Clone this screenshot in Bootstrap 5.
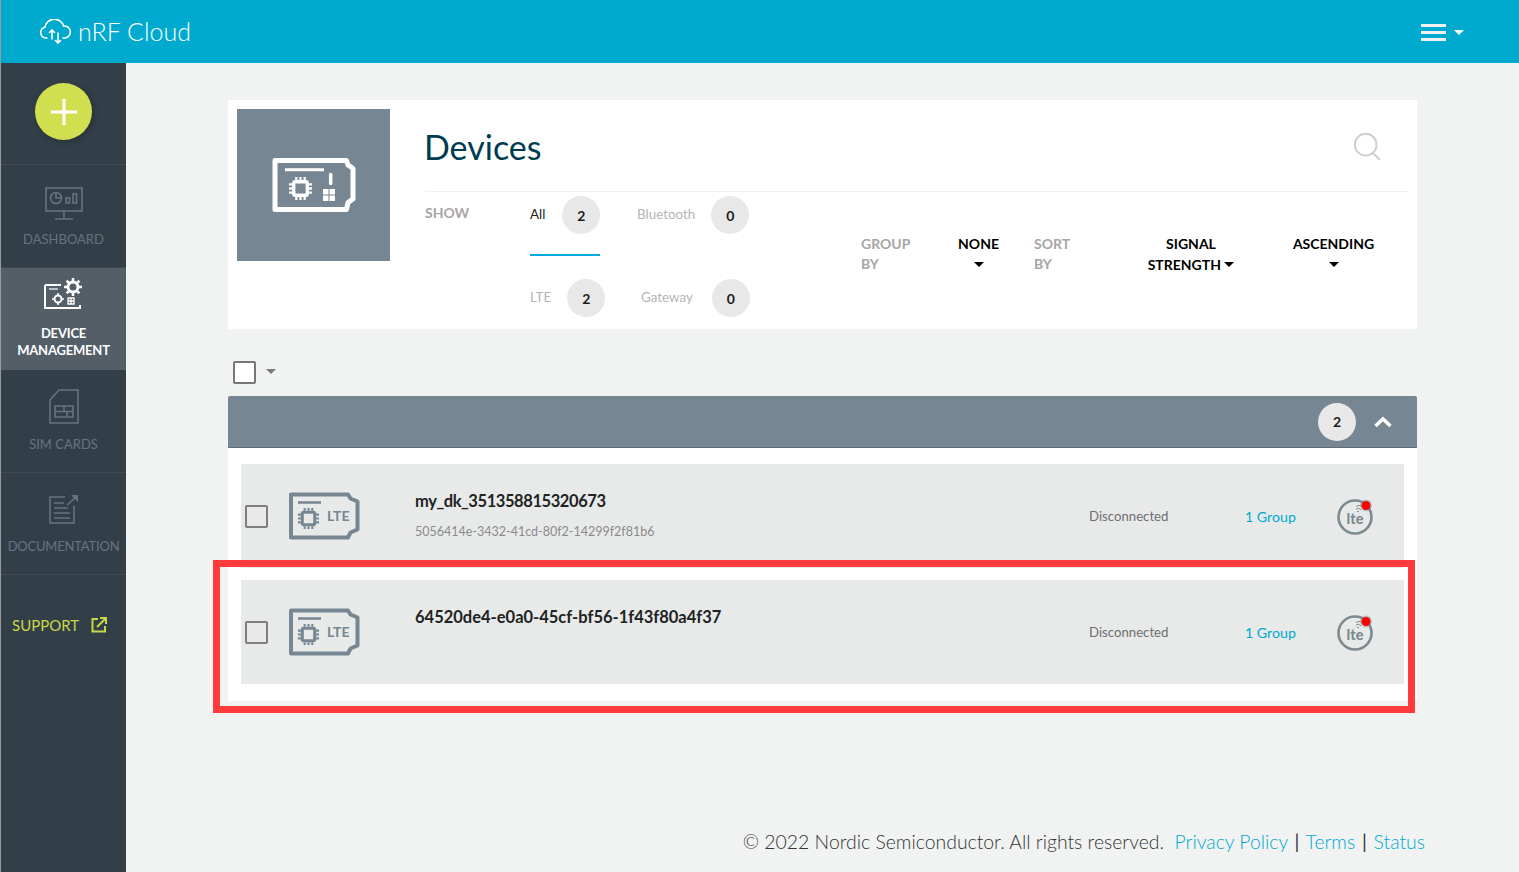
<!DOCTYPE html>
<html lang="en">
<head>
  <meta charset="UTF-8">
  <title>nRF Cloud - Devices</title>
  <link href="https://cdn.jsdelivr.net/npm/bootstrap@5.3.0/dist/css/bootstrap.min.css" rel="stylesheet">
  <style>
    html, body { height: 100%; }
    body {
      background: #f1f3f2;
      font-family: "Lato", "Liberation Sans", sans-serif;
      overflow: hidden;
    }
    .app-shell { height: 872px; border-left: 1px solid #9a9a9a; position: relative; }
    .top-bar { height: 63px; background: #00a9ce; color: #fff; padding: 0 54px 0 38px; }
    .brand-name { font-size: 25px; line-height: 1; margin-left: 7px; font-weight: 300; }
    .burger-wrap { margin: 2px 1px 0 0; }
    .burger { width: 25px; height: 17px; display: flex; flex-direction: column; justify-content: space-between; }
    .burger i { display: block; height: 3px; background: #f0f0f0; }
    .caret-down { width: 0; height: 0; border-left: 5.5px solid transparent; border-right: 5.5px solid transparent; border-top: 5px solid currentColor; display: inline-block; }
    .body-wrap { height: 809px; }
    .side-nav { width: 125px; background: #333f48; flex: none; }
    .add-area { height: 102px; border-bottom: 1px solid #404b54; padding-top: 20px; }
    .add-btn { width: 57px; height: 57px; border-radius: 50%; background: #d0df50; box-shadow: 2px 2px 6px rgba(0,0,0,.25); }
    .side-item { height: 102px; border-bottom: 1px solid #404b54; color: #66747f; font-size: 13px; line-height: 17px; text-align: center; }
    .side-item svg { display: block; margin-left: auto; margin-right: auto; }
    .item-dash { height: 103px; padding-top: 22px; }
    .item-dash svg { margin-bottom: 10px; }
    .item-sim { height: 103px; padding-top: 19px; }
    .item-sim svg { margin-bottom: 12px; }
    .item-doc { padding-top: 21px; letter-spacing: -.2px; }
    .item-doc svg { margin-bottom: 14px; }
    .side-item.is-active { background: #535e67; color: #fff; padding-top: 10px; border-bottom: 0; font-weight: 700; letter-spacing: -.2px; }
    .side-item.is-active svg { margin-bottom: 15px; }
    .side-support { color: #c9d647; font-size: 15px; padding: 39px 0 0 11px; }
    .support-icon { margin-left: 12px; }
    .main-area { padding: 37px 0 0 102px; position: relative; }
    .head-panel { width: 1189px; height: 229px; background: #fff; padding: 9px 9px 0; }
    .head-tile { width: 153px; height: 152px; background: #768692; flex: none; }
    .head-body { margin-left: 35px; flex: 1; }
    .title-line { height: 83px; border-bottom: 1px solid #eff0f0; padding: 0 26px 7px 0; }
    .page-title { font-size: 34px; color: #003c50; font-weight: 400; margin: 0 0 0 -1px; line-height: 1; }
    .show-label { width: 105px; color: #a7a5a6; font-weight: 700; font-size: 14px; padding-top: 12px; line-height: 17px; }
    .tab-cell { width: 107px; height: 64px; padding-top: 4px; }
    .tab-low { width: 111px; height: 38px; padding-top: 0; }
    .tab-low-wide { width: 112px; height: 38px; padding-top: 0; }
    .tab-second { width: 112px; }
    .tab-lower-row { margin-top: 23px; }
    .tab-name { color: #b5b5b5; font-size: 13.4px; margin: 8px 16px 0 0; }
    .tab-name-gw { margin-right: 19px; }
    .tab-name-on { color: #222; margin-right: 17px; }
    .count-dot { width: 38px; height: 38px; border-radius: 50%; background: #e8e8e8; color: #1c1c1c; font-size: 14px; font-weight: 700; display: flex; align-items: center; justify-content: center; flex: none; }
    .tab-on { position: relative; }
    .tab-on::after { content: ""; position: absolute; left: 0; width: 70px; bottom: 0; height: 2px; background: #00a9e0; }
    .sort-area { margin-left: 108px; padding-top: 41px; }
    .sort-label { color: #a7a5a6; font-weight: 700; font-size: 14px; line-height: 20px; padding-top: 1px; }
    .sort-group { width: 97px; }
    .sort-by { width: 112px; }
    .sort-value { color: #000; font-weight: 700; font-size: 14px; line-height: 21px; text-align: center; }
    .sort-value .caret-down { vertical-align: 3px; }
    .val-none { width: 41px; margin-right: 35px; }
    .val-signal { width: 90px; }
    .val-order { width: 85px; margin-left: 55px; }
    .bulk-line { height: 67px; padding: 32px 0 0 5px; color: #7b7b7b; }
    .bulk-caret { margin: 8px 0 0 2px; }
    .check-box { width: 23px; height: 23px; border: 2px solid #777; border-radius: 2px; background: #fff; flex: none; }
    .group-bar { width: 1189px; height: 52px; background: #768692; border-bottom: 1px solid #5f6c76; border-radius: 2px 2px 0 0; padding-right: 25px; }
    .group-chev { margin-left: 2px; }
    .group-body { width: 1189px; height: 253px; background: #fff; padding: 16px 13px 0; }
    .dev-row { height: 104px; background: #e8eaea; margin-bottom: 12px; }
    .dev-check { background: #e8eaea; margin: 0 20px 0 4px; border-color: #7e7e7e; }
    .dev-info { width: 674px; margin-left: 55px; padding-bottom: 1px; }
    .dev-info-top { height: 72px; padding: 10px 0 0; }
    .dev-name { font-size: 16.5px; font-weight: 700; color: #222; line-height: 22px; }
    .dev-name-tight { letter-spacing: -.42px; }
    .dev-id { font-size: 12.5px; color: #8a8a8a; line-height: 18px; margin-top: 11px; }
    .dev-state { width: 156px; font-size: 13.2px; color: #6f6f6f; margin-top: 2px; }
    .dev-group { width: 91px; font-size: 14.2px; color: #00a9ce; margin-top: 2px; }
    .highlight-box { position: absolute; left: 87px; top: 497px; width: 1202px; height: 153px; border: 7px solid #ff3b3b; pointer-events: none; }
    .page-foot { position: absolute; right: 94px; top: 764px; font-size: 19.4px; color: #333; white-space: nowrap; font-weight: 300; }
    .page-foot a { color: #00a9ce; text-decoration: none; }
    .foot-sep { margin: 0 1.5px; font-weight: 400; }
  </style>
</head>
<body>

<svg width="0" height="0" class="position-absolute">
  <symbol id="chip" viewBox="0 0 24 24">
    <rect x="5.5" y="5.5" width="13" height="13" rx="1.5" fill="none" stroke="currentColor" stroke-width="3.2"/>
    <path d="M8 1v3M12 1v3M16 1v3M8 20v3M12 20v3M16 20v3M1 8h3M1 12h3M1 16h3M20 8h3M20 12h3M20 16h3" stroke="currentColor" stroke-width="2.2"/>
  </symbol>
  <symbol id="lte-dot" viewBox="0 0 40 40">
    <circle cx="19" cy="21" r="16.5" fill="none" stroke="#7d8a90" stroke-width="2.6"/>
    <path d="M20 13q3-2 5 1M20 10.500q5-3 8 2M21 15.500q1-.5 2 .5" fill="none" stroke="#7d8a90" stroke-width="1"/>
    <circle cx="30" cy="9.500" r="6" fill="#7d8a90" opacity=".45"/>
    <circle cx="30" cy="9.500" r="4.500" fill="#f00"/>
  </symbol>
  <symbol id="lte-card" viewBox="0 0 72 48">
    <path d="M3 2.500H60L62.500 6.500 69.500 9.500V37.500L62.500 40.500 60 45.500H3Z" fill="none" stroke="#768692" stroke-width="4" stroke-linejoin="round"/>
    <path d="M10 10.500H33" stroke="#768692" stroke-width="2.500"/>
    <use href="#chip" x="9" y="15" width="23" height="23" color="#768692"/>
  </symbol>
</svg>

<div class="app-shell d-flex flex-column">
  <header class="top-bar d-flex align-items-center">
    <svg width="32" height="26" viewBox="0 0 32 26" fill="none" stroke="#fff" stroke-width="1.600" stroke-linecap="round">
      <path d="M8 19H6.500A5.500 5.500 0 0 1 6 8.200 9.500 9.500 0 0 1 24.500 7 6 6 0 0 1 26 19H24"/>
      <path d="M13 20V11M10.500 13.500 13 11l2.500 2.500M19 14v10M16.500 21.500 19 24l2.500-2.500"/>
    </svg>
    <span class="brand-name">nRF Cloud</span>
    <span class="ms-auto d-flex align-items-center gap-2 burger-wrap">
      <span class="burger"><i></i><i></i><i></i></span>
      <span class="caret-down"></span>
    </span>
  </header>

  <div class="body-wrap d-flex">
    <nav class="side-nav">
      <div class="add-area">
        <div class="add-btn mx-auto d-flex align-items-center justify-content-center">
          <svg width="26" height="26" viewBox="0 0 26 26"><path d="M13 0v26M0 13h26" stroke="#fff" stroke-width="3"/></svg>
        </div>
      </div>
      <div class="side-item item-dash">
        <svg width="38" height="34" viewBox="0 0 38 34" fill="none" stroke="#66747f" stroke-width="1.600">
          <rect x="1" y="1" width="36" height="23"/>
          <path d="M19 24v7M10 32h18"/>
          <circle cx="11" cy="11" r="5.500"/><path d="M11 5.500V11h5.500"/>
          <rect x="21" y="11" width="3.500" height="5"/><rect x="28" y="7" width="3.500" height="9"/>
        </svg>
        DASHBOARD
      </div>
      <div class="side-item is-active">
        <svg width="40" height="32" viewBox="0 0 40 32" fill="none" stroke="#fff" stroke-width="2">
          <path d="M1 7H17M1 7V30H36V27"/>
          <path d="M5 11h9" stroke-width="1.200"/>
          <circle cx="14" cy="21" r="3.500"/>
          <path d="M14 15v2.500M14 24.500V27M8 21h2.500M17.500 21H20" stroke-width="1.500"/>
          <path d="M24 20h6v6h-6zM27 20v6M24 23h6" stroke-width="1.300"/>
          <circle cx="29" cy="9" r="5" stroke-width="3"/>
          <path d="M29 0v3.500M29 14.500V18M20 9h3.500M34.500 9H38M22.600 2.600 25 5M33 13l2.400 2.400M22.600 15.400 25 13M33 5l2.400-2.400" stroke-width="2.500"/>
        </svg>
        DEVICE<br>MANAGEMENT
      </div>
      <div class="side-item item-sim">
        <svg width="30" height="35" viewBox="0 0 30 35" fill="none" stroke="#66747f" stroke-width="1.600">
          <path d="M10 1H29V34H1V11Z"/>
          <path d="M6 17H24V28H6ZM6 22.500H24M15 17V22.500M18 22.500V28"/>
        </svg>
        SIM CARDS
      </div>
      <div class="side-item item-doc">
        <svg width="30" height="30" viewBox="0 0 30 30" fill="none" stroke="#66747f" stroke-width="1.600">
          <path d="M16 3H1V29H25V12"/>
          <path d="M5 9H15M5 14H19M5 19H21M5 24H21"/>
          <path d="M18 11 27 3"/><path d="M22 1H29V8Z" stroke="none" fill="#66747f"/>
        </svg>
        DOCUMENTATION
      </div>
      <div class="side-support d-flex align-items-center">
        SUPPORT
        <svg class="support-icon" width="16" height="16" viewBox="0 0 16 16" fill="none" stroke="#c9d647" stroke-width="2">
          <path d="M7 2H1.500V14.500H14V9"/><path d="M6 10 14 2"/><path d="M9 1h6v6"/>
        </svg>
      </div>
    </nav>

    <main class="main-area flex-grow-1">
      <section class="head-panel d-flex">
        <div class="head-tile d-flex align-items-center justify-content-center">
          <svg width="84" height="54" viewBox="0 0 84 54" fill="none" stroke="#fff">
            <path d="M3 2.500H74.500L76 7 81 10.500V41L76 44.500 74.500 51.500H3Z" stroke-width="5" stroke-linejoin="round"/>
            <path d="M13 11.700H52" stroke-width="3"/>
            <use href="#chip" x="16" y="18" width="25" height="25" color="#fff"/>
            <path d="M58.700 16.500v9" stroke-width="3.500" stroke-linecap="round"/>
            <path d="M51 31h5.500v5.500H51zM57.500 31H63v5.500h-5.500zM51 37.500h5.500V43H51zM57.500 37.500H63V43h-5.500z" fill="#fff" stroke="none"/>
          </svg>
        </div>
        <div class="head-body">
          <div class="title-line d-flex align-items-center justify-content-between">
            <h1 class="page-title">Devices</h1>
            <svg width="29" height="29" viewBox="0 0 32 32" fill="none" stroke="#cfcfcf" stroke-width="2.200">
              <circle cx="14" cy="14" r="12"/><path d="M22 23l7 7" stroke-linecap="round"/>
            </svg>
          </div>
          <div class="d-flex">
            <div class="show-label">SHOW</div>
            <div>
              <div class="d-flex">
                <div class="tab-cell tab-on d-flex align-items-start">
                  <span class="tab-name tab-name-on">All</span>
                  <span class="count-dot">2</span>
                </div>
                <div class="tab-cell tab-second d-flex align-items-start">
                  <span class="tab-name">Bluetooth</span>
                  <span class="count-dot">0</span>
                </div>
              </div>
              <div class="d-flex tab-lower-row">
                <div class="tab-cell tab-low d-flex align-items-start">
                  <span class="tab-name">LTE</span>
                  <span class="count-dot">2</span>
                </div>
                <div class="tab-cell tab-low-wide d-flex align-items-start">
                  <span class="tab-name tab-name-gw">Gateway</span>
                  <span class="count-dot">0</span>
                </div>
              </div>
            </div>
            <div class="d-flex sort-area">
              <div class="sort-label sort-group">GROUP<br>BY</div>
              <div class="sort-value val-none">NONE<br><span class="caret-down"></span></div>
              <div class="sort-label sort-by">SORT<br>BY</div>
              <div class="sort-value val-signal">SIGNAL<br>STRENGTH <span class="caret-down"></span></div>
              <div class="sort-value val-order">ASCENDING<br><span class="caret-down"></span></div>
            </div>
          </div>
        </div>
      </section>

      <div class="bulk-line d-flex gap-2">
        <span class="check-box"></span>
        <span class="caret-down bulk-caret"></span>
      </div>

      <div class="group-bar d-flex align-items-center justify-content-end">
        <span class="count-dot me-3">2</span>
        <svg class="group-chev" width="18" height="12" viewBox="0 0 18 12" fill="none" stroke="#fff" stroke-width="3.500"><path d="M1.500 10 9 3l7.500 7"/></svg>
      </div>
      <div class="group-body">
        <div class="dev-row d-flex align-items-center">
          <span class="check-box dev-check"></span>
          <svg width="72" height="48"><use href="#lte-card"/><text x="39" y="29" font-family="Lato, sans-serif" font-weight="700" font-size="14" fill="#768692">LTE</text></svg>
          <div class="dev-info">
            <div class="dev-name dev-name-tight">my_dk_351358815320673</div>
            <div class="dev-id">5056414e-3432-41cd-80f2-14299f2f81b6</div>
          </div>
          <div class="dev-state">Disconnected</div>
          <a class="dev-group text-decoration-none">1 Group</a>
          <svg width="40" height="40"><use href="#lte-dot"/><text x="19" y="28" text-anchor="middle" font-family="Lato, sans-serif" font-weight="900" font-size="14.500" fill="#7d8a90">lte</text></svg>
        </div>
        <div class="dev-row d-flex align-items-center">
          <span class="check-box dev-check"></span>
          <svg width="72" height="48"><use href="#lte-card"/><text x="39" y="29" font-family="Lato, sans-serif" font-weight="700" font-size="14" fill="#768692">LTE</text></svg>
          <div class="dev-info dev-info-top">
            <div class="dev-name">64520de4-e0a0-45cf-bf56-1f43f80a4f37</div>
          </div>
          <div class="dev-state">Disconnected</div>
          <a class="dev-group text-decoration-none">1 Group</a>
          <svg width="40" height="40"><use href="#lte-dot"/><text x="19" y="28" text-anchor="middle" font-family="Lato, sans-serif" font-weight="900" font-size="14.500" fill="#7d8a90">lte</text></svg>
        </div>
      </div>

      <div class="highlight-box"></div>
      <div class="page-foot">© 2022 Nordic Semiconductor. All rights reserved. &nbsp;<a href="#">Privacy Policy</a> <span class="foot-sep">|</span> <a href="#">Terms</a> <span class="foot-sep">|</span> <a href="#">Status</a></div>
    </main>
  </div>
</div>

<script src="https://cdn.jsdelivr.net/npm/bootstrap@5.3.0/dist/js/bootstrap.bundle.min.js"></script>
</body>
</html>
